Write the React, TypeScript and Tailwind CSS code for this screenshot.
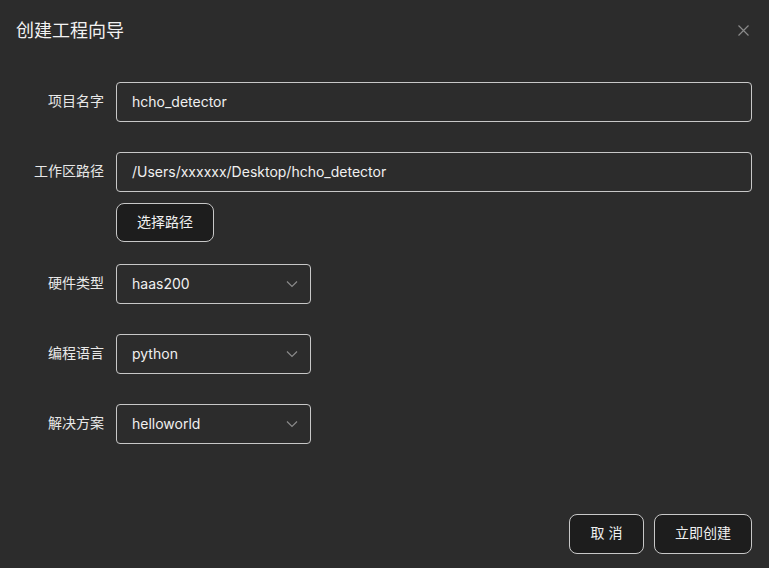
import React from "react";

const font = { fontFamily: 'Inter, "Noto Sans CJK SC", sans-serif' };

function Chevron() {
  return (
    <svg width="12" height="8" viewBox="0 0 12 8" fill="none" className="mt-[2px] text-[#8a8a8a]">
      <path d="M1 1.5 L6 6.5 L11 1.5" stroke="currentColor" strokeWidth="1.2" />
    </svg>
  );
}

function Label({ children }: { children: React.ReactNode }) {
  return <div className="w-[104px] shrink-0 pb-[3px] pr-[12px] text-right text-[14px] text-[#e8e8e8]">{children}</div>;
}

function Select({ value }: { value: string }) {
  return (
    <div className="flex h-[40px] w-[195px] items-center justify-between rounded-[4px] border border-[#c8c8c8] pb-[2px] pl-[15px] pr-[12px] text-[14px] text-[#f0f0f0]">
      <span>{value}</span>
      <Chevron />
    </div>
  );
}

export default function App() {
  return (
    <div className="flex h-[568px] w-[769px] flex-col bg-[#2c2c2c]" style={font}>
      <div className="flex h-[60px] items-center justify-between pl-[16px] pr-[20px]">
        <div className="text-[18px] text-[#f2f2f2]">创建工程向导</div>
        <svg width="11" height="11" viewBox="0 0 11 11" className="text-[#8a8a8a]">
          <path d="M0.5 0.5 L10.5 10.5 M10.5 0.5 L0.5 10.5" stroke="currentColor" strokeWidth="1.2" />
        </svg>
      </div>
      <div className="flex flex-col pl-[12px] pr-[17px] pt-[22px]">
        <div className="flex items-center">
          <Label>项目名字</Label>
          <div className="flex h-[40px] flex-1 items-center rounded-[4px] border border-[#c8c8c8] pb-[2px] pl-[15px] text-[14px] text-[#f0f0f0]">
            hcho_detector
          </div>
        </div>
        <div className="mt-[30px] flex items-center">
          <Label>工作区路径</Label>
          <div className="flex h-[40px] flex-1 items-center rounded-[4px] border border-[#c8c8c8] pb-[2px] pl-[15px] text-[14px] text-[#f0f0f0]">
            /Users/xxxxxx/Desktop/hcho_detector
          </div>
        </div>
        <div className="mt-[11px] flex">
          <div className="w-[104px] shrink-0" />
          <div className="flex h-[39px] w-[98px] items-center justify-center rounded-[8px] border border-[#c8c8c8] bg-[#1d1d1d] pb-[2px] text-[14px] text-[#f0f0f0]">
            选择路径
          </div>
        </div>
        <div className="mt-[22px] flex items-center">
          <Label>硬件类型</Label>
          <Select value="haas200" />
        </div>
        <div className="mt-[30px] flex items-center">
          <Label>编程语言</Label>
          <Select value="python" />
        </div>
        <div className="mt-[30px] flex items-center">
          <Label>解决方案</Label>
          <Select value="helloworld" />
        </div>
      </div>
      <div className="mt-auto flex justify-end gap-[10px] pb-[14px] pr-[17px]">
        <div className="flex h-[40px] w-[75px] items-center justify-center rounded-[8px] border border-[#c8c8c8] bg-[#1d1d1d] pb-[3px] text-[14px] text-[#f0f0f0]">
          取 消
        </div>
        <div className="flex h-[40px] w-[98px] items-center justify-center rounded-[8px] border border-[#c8c8c8] bg-[#1d1d1d] pb-[3px] text-[14px] text-[#f0f0f0]">
          立即创建
        </div>
      </div>
    </div>
  );
}
